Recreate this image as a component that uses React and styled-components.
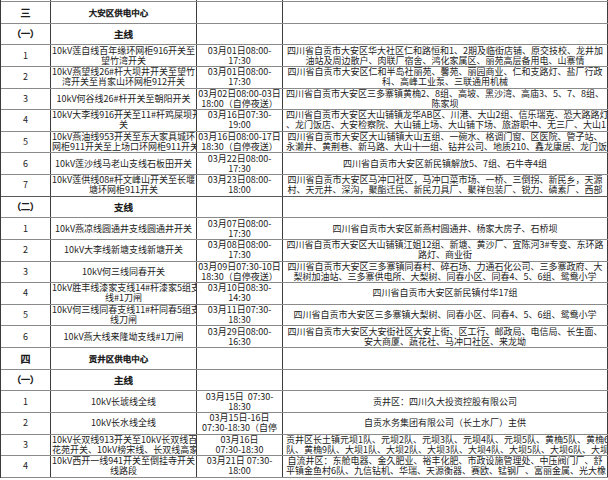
import React from "react";
import styled, { createGlobalStyle } from "styled-components";

const GlobalStyle = createGlobalStyle`
  html, body { margin: 0; padding: 0; background: #ffffff; }
  body { width: 608px; height: 480px; overflow: hidden; }
`;

const Sheet = styled.div`
  width: 608px;
  margin-top: -19.6px;
  border-left: 1px solid #3c3c3c;
  box-sizing: border-box;
  font-family: "Noto Sans CJK SC", "Noto Sans", sans-serif;
  font-size: 9px;
  color: #222222;
`;

const Row = styled.div`
  display: grid;
  grid-template-columns: 50px 146px 86px 325px;
  height: 21.64px;
  box-sizing: border-box;
  border-bottom: 1px solid ${(p) => (p.$strong ? "#5a5a5a" : "#8a8a8a")};
`;

const Cell = styled.div`
  box-sizing: border-box;
  border-right: 1px solid #3c3c3c;
  display: flex;
  flex-direction: column;
  justify-content: center;
  align-items: safe center;
  text-align: center;
  overflow: hidden;
  padding: 0 ${(p) => p.$padR ?? p.$pad ?? 1}px 0 ${(p) => p.$pad ?? 1}px;
`;

const TitleCell = styled.div`
  box-sizing: border-box;
  border-right: 1px solid #3c3c3c;
  display: flex;
  align-items: center;
  justify-content: center;
  overflow: hidden;
  white-space: nowrap;
  padding: 0 ${(p) => p.$padR ?? 0}px 0 0;
  font-size: ${(p) => p.$size}px;
  color: #111111;
  -webkit-text-stroke: 0.45px #111111;
`;

const Line = styled.div`
  white-space: nowrap;
  line-height: 10px;
`;

const CellText = ({ lines, ...rest }) => (
  <Cell {...rest}>
    {(lines || []).map((l, i) => (
      <Line key={i}>{l}</Line>
    ))}
  </Cell>
);

const rows = [
  { kind: "item", no: "", name: [], time: ["03月01日08:00-", "17:30"], area: [] },
  { kind: "section", no: "三", name: "大安区供电中心" },
  { kind: "sub", no: "（一）", name: "主线" },
  {
    kind: "item",
    no: "1",
    name: ["10kV莲自线百年缘环网柜916开关至", "望竹湾开关"],
    time: ["03月01日08:00-", "17:30"],
    area: [
      "四川省自贡市大安区华大社区仁和路恒和1、2期及临街店铺、原交技校、龙井加",
      "油站及周边散户、肉联厂宿舍、鸿化家属区、丽苑高层备用电、山寨情",
    ],
  },
  {
    kind: "item",
    no: "2",
    name: ["10kV燕望线26#杆大坝井开关至望竹", "湾开关至肖家山环网柜912开关"],
    time: ["03月01日08:00-", "17:30"],
    area: [
      "四川省自贡市大安区仁和半岛社丽苑、馨苑、丽园商业、仁和支路灯、盐厂行政",
      "科、高峰工业泵、三联通用机械",
    ],
  },
  {
    kind: "item",
    no: "3",
    name: ["10kV何谷线26#杆开关至朝阳开关"],
    time: ["03月02日08:00-03日", "18:00（自停夜送）"],
    area: [
      "四川省自贡市大安区三多寨镇黄桷2、8组、高坡、黑沙湾、高庙3、5、7、8组、",
      "陈家坝",
    ],
  },
  {
    kind: "item",
    no: "4",
    name: ["10kV大李线916开关至11#杆鸡屎坝开", "关"],
    time: ["03月16日07:30-", "19:00"],
    area: [
      "四川省自贡市大安区大山铺镇龙华AB区、川港、大山2组、信乐瑞克、恐大路路灯",
      "、龙门饭店、大安检察院、大山铺上场、大山铺下场、旅游职中、无三厂、大山1",
    ],
  },
  {
    kind: "item",
    no: "5",
    name: ["10kV燕油线953开关至东大家具城环", "网柜911开关至上场口环网柜911开关"],
    time: ["03月16日08:00-17日", "18:30（自停夜送）"],
    area: [
      "四川省自贡市大安区大山铺镇大山五组、一碗水、格调门窗、区医院、管子站、",
      "永濑井、黄荆巷、新马路、大山十一组、钻井公司、地质210、鑫龙康居、龙门饭",
    ],
  },
  {
    kind: "item",
    no: "6",
    name: ["10kV莲沙线马老山支线石板田开关"],
    time: ["03月22日08:00-", "17:30"],
    area: ["四川省自贡市大安区新民镇解放5、7组、石牛寺4组"],
  },
  {
    kind: "item",
    no: "7",
    name: ["10kV莲供线08#杆文峰山开关至长堰", "塘环网柜911开关"],
    time: ["03月23日08:00-", "18:00"],
    area: [
      "四川省自贡市大安区马冲口社区，马冲口菜市场、一桥、三倒拐、新民乡，天源",
      "村、天元井、深沟，聚酯迁民、新民刀具厂、聚祥包装厂、锐力、磷素厂、西部",
    ],
    strong: true,
  },
  { kind: "sub", no: "（二）", name: "支线" },
  {
    kind: "item",
    no: "1",
    name: ["10kV燕凉线圆通井支线圆通井开关"],
    time: ["03月07日08:00-", "17:30"],
    area: ["四川省自贡市大安区新燕村圆通井、杨家大房子、石桥坝"],
  },
  {
    kind: "item",
    no: "2",
    name: ["10kV大李线新塘支线新塘开关"],
    time: ["03月08日08:00-", "17:30"],
    area: [
      "四川省自贡市大安区大山铺镇江姐12组、新塘、黄沙厂、宜陈河3#专变、东环路",
      "路灯、商业街",
    ],
  },
  {
    kind: "item",
    no: "3",
    name: ["10kV何三线同春开关"],
    time: ["03月09日07:30-10日", "18:30（自停夜送）"],
    area: [
      "四川省自贡市大安区三多寨镇同春村、碎石场、力通石化公司、三多寨政府、大",
      "梨树加油站、三多寨供电所、大梨树、同春小区、同春4、5、6组、鸳鸯小学",
    ],
  },
  {
    kind: "item",
    no: "4",
    name: ["10kV胜丰线漆家支线14#杆漆家5组支", "线#1刀闸"],
    time: ["03月10日08:30-", "14:30"],
    area: ["四川省自贡市大安区新民镇付华17组"],
  },
  {
    kind: "item",
    no: "5",
    name: ["10kV何三线同春支线11#杆同春5组支", "线刀闸"],
    time: ["03月11日07:30-", "18:30"],
    area: ["四川省自贡市大安区三多寨镇大梨树、同春小区、同春4、5、6组、鸳鸯小学"],
  },
  {
    kind: "item",
    no: "6",
    name: ["10kV燕大线来隆坳支线#1刀闸"],
    time: ["03月29日08:00-", "16:30"],
    area: [
      "四川省自贡市大安区大安街社区大安上街、区工行、邮政局、电信局、长生面、",
      "安大商厦、蔬花社、马冲口社区、来龙坳",
    ],
  },
  { kind: "section", no: "四", name: "贡井区供电中心" },
  { kind: "sub", no: "（一）", name: "主线" },
  {
    kind: "item",
    no: "1",
    name: ["10kV长琥线全线"],
    time: ["03月15日\u00a0\u00a007:30-", "18:30"],
    area: ["贡井区：四川久大投资控股有限公司"],
  },
  {
    kind: "item",
    no: "2",
    name: ["10kV长水线全线"],
    time: ["03月15日-16日", "07:30-18:30（自停"],
    area: ["自贡水务集团有限公司（长土水厂）主供"],
  },
  {
    kind: "item",
    no: "3",
    name: ["10kV长双线913开关至10kV长双线百", "花苑开关、10kV榜宋线、长双线高家"],
    time: ["03月16日", "07:30-18:30"],
    area: [
      "贡井区长土镇元坝1队、元坝2队、元坝3队、元坝4队、元坝5队、黄桷5队、黄桷6",
      "队、黄桷9队、大坝1队、大坝2队、大坝3队、大坝4队、大坝5队、大坝6队、大坝",
    ],
  },
  {
    kind: "item",
    no: "4",
    name: ["10kV西开一线941开关至倒挂寺开关", "线路段"],
    time: ["03月21日 07:30-", "18:00"],
    area: [
      "自流井区：东舱电器、金久肥业、裕丰化肥、市政设施管理处、中压阀门厂、舒",
      "平镇金鱼村6队、九信钻机、华瑞、天源衡器、赛欧、锰钢厂、富丽金属、光大橡",
    ],
  },
];

export default function App() {
  return (
    <>
      <GlobalStyle />
      <Sheet>
        {rows.map((r, i) => {
          if (r.kind === "section" || r.kind === "sub") {
            const section = r.kind === "section";
            return (
              <Row key={i}>
                <TitleCell $size={section ? 10 : 9}>{r.no}</TitleCell>
                <TitleCell $size={section ? 8.5 : 9.5} $padR={section ? 10 : 0}>
                  {r.name}
                </TitleCell>
                <Cell />
                <Cell />
              </Row>
            );
          }
          return (
            <Row key={i} $strong={r.strong}>
              <CellText lines={[r.no]} />
              <CellText lines={r.name} />
              <CellText lines={r.time} />
              <CellText lines={r.area} $pad={3} />
            </Row>
          );
        })}
      </Sheet>
    </>
  );
}
